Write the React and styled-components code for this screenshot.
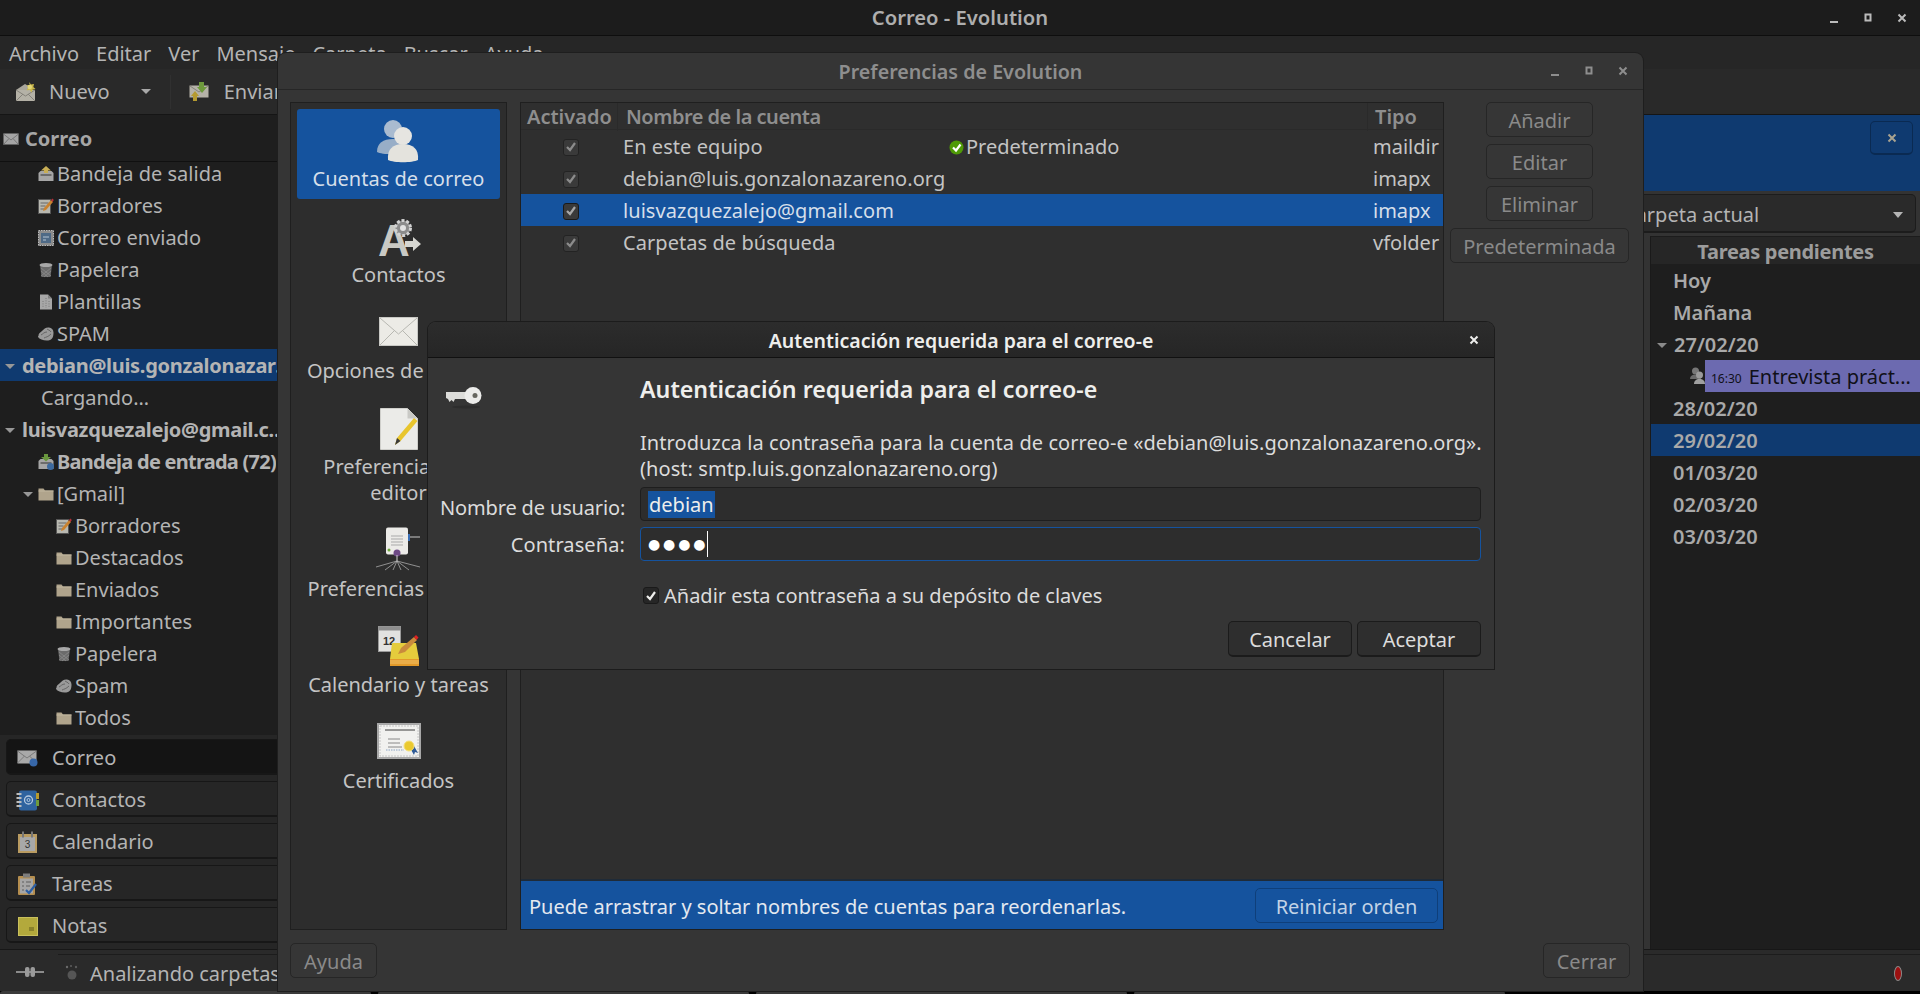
import styled, { createGlobalStyle } from 'styled-components';

const GlobalStyle = createGlobalStyle`
	html, body {
		margin: 0;
		padding: 0;
		background: #000;
		overflow: hidden;
	}
	* {
		box-sizing: border-box;
	}
`;

const Desktop = styled.div`
	position: relative;
	width: 1920px;
	height: 994px;
	overflow: hidden;
	background: #000;
	font-family: "Noto Sans", sans-serif;
	font-size: 20px;
	line-height: 26px;
`;

const Svg = styled.svg`
	display: block;
	flex: none;
`;

/* main window (behind the dialogs) */
const MainWindow = styled.div`
	display: flex;
	flex-direction: column;
	height: 991px;
	background: #262626;
	color: #b4b4b4;
`;

const MainTitleBar = styled.div`
	position: relative;
	display: flex;
	align-items: center;
	justify-content: center;
	height: 36px;
	flex: none;
	padding-bottom: 2px;
	background: #1c1c1c;
	border-bottom: 1px solid #0e0e0e;
	font-weight: 600;
	font-size: 20.2px;
	color: #aeaeae;
`;

const WindowControls = styled.div`
	position: absolute;
	top: 0;
	right: ${(p) => p.$right}px;
	height: 36px;
	display: flex;
	align-items: center;
	gap: 20px;
`;

const MenuBar = styled.div`
	display: flex;
	align-items: center;
	gap: 17px;
	height: 33px;
	flex: none;
	padding: 2px 0 0 9px;
	background: #262626;
`;

const ToolBar = styled.div`
	display: flex;
	align-items: center;
	height: 46px;
	flex: none;
	padding-left: 15px;
	background: #292929;
	border-bottom: 1px solid #151515;
`;

const ToolLabel = styled.span`
	margin-left: ${(p) => p.$gap}px;
`;

const ToolArrow = styled.span`
	width: 0;
	height: 0;
	margin: 0 19px 0 31px;
	border-left: 5px solid transparent;
	border-right: 5px solid transparent;
	border-top: 5px solid #a8a8a8;
`;

const ToolSep = styled.span`
	width: 1px;
	height: 34px;
	margin-right: 18px;
	background: #303030;
`;

const MainBody = styled.div`
	display: flex;
	flex: 1;
	min-height: 0;
`;

const LeftColumn = styled.div`
	display: flex;
	flex-direction: column;
	width: 320px;
	flex: none;
`;

const SidebarHeader = styled.div`
	display: flex;
	align-items: center;
	gap: 6px;
	height: 47px;
	flex: none;
	padding: 2px 0 0 3px;
	background: #1e1e1e;
	border-bottom: 1px solid #101010;
	font-weight: 700;
	color: #a6a6a6;
`;

const TreeScroll = styled.div`
	height: 573px;
	flex: none;
	overflow: hidden;
	background: #1e1e1e;
`;

const TreeRow = styled.div`
	display: flex;
	align-items: center;
	height: 32px;
	padding: 2px 24px 0 ${(p) => p.$indent}px;
	line-height: 26px;
	white-space: nowrap;
	font-weight: ${(p) => (p.$bold ? 700 : 400)};
	letter-spacing: ${(p) => p.$spacing || 0}px;
	background: ${(p) => (p.$selected ? '#0f3a70' : 'transparent')};

	&:first-child {
		height: 27px;
		padding-bottom: 5px;
		line-height: 22px;
	}
`;

const TreeLabel = styled.span`
	min-width: 0;
	overflow: hidden;
	text-overflow: ellipsis;
`;

const TreeArrow = styled.span`
	width: 0;
	height: 0;
	flex: none;
	margin-right: ${(p) => p.$gap}px;
	border-left: 5px solid transparent;
	border-right: 5px solid transparent;
	border-top: 5px solid #979797;
`;

const TreeIcon = styled.span`
	flex: none;
	margin-right: 3px;
`;

const Switcher = styled.div`
	display: flex;
	flex-direction: column;
	gap: 6px;
	flex: 1;
	padding: 4px 0 0 6px;
	background: #262626;
`;

const SwitchButton = styled.div`
	display: flex;
	align-items: center;
	height: 36px;
	flex: none;
	padding: 3px 0 0 10px;
	border: 1px solid #171717;
	border-bottom-width: 2px;
	border-radius: 5px;
	background: ${(p) => (p.$active ? '#141414' : '#262626')};
`;

const SwitchIconSlot = styled.span`
	display: flex;
	justify-content: center;
	width: 21px;
	margin-right: 14px;
	flex: none;
`;

const StatusBar = styled.div`
	display: flex;
	height: 42px;
	flex: none;
	border-top: 1px solid #171717;
	background: #2a2a2a;
`;

const PlugCell = styled.div`
	display: flex;
	align-items: center;
	width: 58px;
	flex: none;
	padding: 2px 0 0 16px;
`;

const StatusMain = styled.div`
	display: flex;
	align-items: center;
	flex: 1;
	margin-top: 4px;
	padding: 0 18px 0 7px;
	border-top: 1px solid #1c1c1c;
`;

const StatusText = styled.span`
	flex: 1;
	margin-left: 11px;
	padding-top: 1px;
`;

const RedLed = styled.span`
	width: 8px;
	height: 15px;
	border-radius: 50%;
	background: #9c1010;
	border: 1px solid #8a8a8a;
`;

const CenterFill = styled.div`
	flex: 1;
	background: #353535;
`;

const RightColumn = styled.div`
	display: flex;
	flex-direction: column;
	width: 320px;
	flex: none;
	background: #333;
`;

const BlueBanner = styled.div`
	display: flex;
	justify-content: flex-end;
	height: 76px;
	flex: none;
	padding: 6px 7px 0 0;
	background: #0f3a70;
`;

const BannerClose = styled.div`
	display: flex;
	align-items: center;
	justify-content: center;
	width: 43px;
	height: 34px;
	border: 1px solid #0a2a52;
	border-bottom-width: 2px;
	border-radius: 5px;
`;

const Combo = styled.div`
	display: flex;
	align-items: center;
	justify-content: space-between;
	height: 39px;
	flex: none;
	margin: 3px 4px 3px 0;
	padding: 3px 12px 0 22px;
	background: #2a2a2a;
	border: 1px solid #1c1c1c;
	border-bottom-width: 2px;
	border-radius: 5px;
`;

const ComboArrow = styled.span`
	width: 0;
	height: 0;
	border-left: 5px solid transparent;
	border-right: 5px solid transparent;
	border-top: 6px solid #b4b4b4;
`;

const TaskPanel = styled.div`
	display: flex;
	flex-direction: column;
	flex: 1;
	min-height: 0;
	margin-left: 50px;
	background: #1e1e1e;
	border-left: 1px solid #1a1a1a;
	border-top: 1px solid #1c1c1c;
	font-weight: 600;
	color: #a9a9a9;
`;

const TaskHeader = styled.div`
	height: 27px;
	flex: none;
	line-height: 29px;
	text-align: center;
	font-weight: 700;
	letter-spacing: -0.3px;
	color: #9c9c9c;
	background: #262626;
`;

const TaskRow = styled.div`
	display: flex;
	align-items: center;
	height: 32px;
	flex: none;
	padding: 2px 0 0 ${(p) => p.$indent || 22}px;
	background: ${(p) => (p.$selected ? '#0f3a70' : 'transparent')};
`;

const TaskArrow = styled.span`
	width: 0;
	height: 0;
	margin-right: 7px;
	border-left: 5px solid transparent;
	border-right: 5px solid transparent;
	border-top: 5px solid #8a8a8a;
`;

const EventRow = styled.div`
	display: flex;
	align-items: center;
	height: 32px;
	flex: none;
	padding-left: 39px;
`;

const EventChip = styled.div`
	display: flex;
	align-items: center;
	flex: 1;
	min-width: 0;
	height: 32px;
	padding: 2px 0 0 6px;
	background: #6c6ab0;
	color: #101018;
	font-weight: 400;
	white-space: nowrap;
	overflow: hidden;
`;

const EventTime = styled.span`
	margin: 4px 7px 0 0;
	font-size: 12px;
`;

const BottomTabs = styled.div`
	display: flex;
	gap: 7px;
	height: 3px;
`;

const BottomTab = styled.div`
	width: 371px;
	background: #3a3a3a;
	border-radius: 3px 3px 0 0;
`;

/* floating windows */
const PrefWindow = styled.div`
	position: absolute;
	left: 278px;
	top: 53px;
	width: 1365px;
	height: 938px;
	display: flex;
	flex-direction: column;
	background: #353535;
	border-radius: 8px 8px 0 0;
	box-shadow: 0 0 0 1px #1e1e1e;
	color: #c9c9c9;
`;

const PrefTitle = styled.div`
	position: relative;
	display: flex;
	align-items: center;
	justify-content: center;
	height: 37px;
	flex: none;
	padding-top: 2px;
	border-bottom: 1px solid #262626;
	font-weight: 600;
	font-size: 19.7px;
	color: #8e8e8e;
`;

const PrefBody = styled.div`
	display: flex;
	flex-direction: column;
	flex: 1;
	min-height: 0;
	padding: 12px 13px 13px 12px;
`;

const PrefMain = styled.div`
	display: flex;
	gap: 13px;
	flex: 1;
	min-height: 0;
`;

const NavList = styled.div`
	display: flex;
	flex-direction: column;
	gap: 6px;
	width: 217px;
	flex: none;
	padding: 6px;
	background: #2d2d2d;
	border: 1px solid #1f1f1f;
	overflow: hidden;
`;

const NavItem = styled.div`
	display: flex;
	flex-direction: column;
	align-items: center;
	justify-content: flex-end;
	height: ${(p) => p.$height || 90}px;
	flex: none;
	padding-bottom: 7px;
	border-radius: 3px;
	text-align: center;
	background: ${(p) => (p.$selected ? '#15539e' : 'transparent')};
	color: ${(p) => (p.$selected ? '#d6dfea' : '#c4c4c4')};
`;

const NavIconSlot = styled.div`
	margin-bottom: ${(p) => p.$lift || 0}px;
`;

const NavLabel = styled.div`
	margin-top: 4px;
	white-space: nowrap;
`;

const AccountsPane = styled.div`
	display: flex;
	flex-direction: column;
	width: 924px;
	flex: none;
	background: #2f2f2f;
	border: 1px solid #1f1f1f;
`;

const AccountsHead = styled.div`
	display: grid;
	grid-template-columns: 97px 750px 1fr;
	height: 27px;
	flex: none;
	line-height: 28px;
	border-bottom: 1px solid #2a2a2a;
	font-weight: 600;
	color: #8e8e8e;
`;

const HeadCell = styled.div`
	padding-left: ${(p) => p.$pad}px;
	letter-spacing: ${(p) => p.$spacing || 0}px;
	border-right: ${(p) => (p.$last ? '0' : '1px solid #2a2a2a')};
`;

const AccountRow = styled.div`
	display: grid;
	grid-template-columns: 97px 329px 420px 1fr;
	align-items: center;
	height: 32px;
	padding-top: 2px;
	background: ${(p) => (p.$selected ? '#15539e' : 'transparent')};
	color: ${(p) => (p.$selected ? '#d6dfea' : '#c4c4c4')};
`;

const CheckCell = styled.div`
	display: flex;
	justify-content: center;
	padding-left: 2px;
`;

const CheckBox = styled.span`
	display: flex;
	align-items: center;
	justify-content: center;
	width: 16px;
	height: 17px;
	flex: none;
	border-radius: 3px;
	border: 1px solid ${(p) => (p.$dark ? '#1a1a1a' : '#232323')};
	background: ${(p) => p.$fill};
`;

const NameCell = styled.div`
	padding-left: 5px;
	letter-spacing: 0.06px;
	white-space: nowrap;
`;

const DefaultCell = styled.div`
	display: flex;
	align-items: center;
	gap: 2px;
	padding-left: 2px;
`;

const TypeCell = styled.div`
	padding-left: 6px;
`;

const AccountsFill = styled.div`
	flex: 1;
`;

const InfoBar = styled.div`
	display: flex;
	align-items: center;
	justify-content: space-between;
	height: 50px;
	flex: none;
	padding: 0 5px 0 8px;
	background: #15539e;
	border-top: 2px solid #1f2b38;
	color: #e4e9f0;
`;

const InfoText = styled.span`
	padding-top: 3px;
`;

const InfoButton = styled.div`
	display: flex;
	align-items: center;
	justify-content: center;
	width: 183px;
	height: 35px;
	padding-top: 3px;
	border: 1px solid #0f3f7a;
	border-radius: 5px;
	color: #c3d3e6;
`;

const ActionColumn = styled.div`
	display: flex;
	flex-direction: column;
	align-items: center;
	gap: 7px;
	width: 179px;
	flex: none;
	margin-left: -7px;
`;

const DisabledButton = styled.div`
	display: flex;
	align-items: center;
	justify-content: center;
	width: ${(p) => p.$width}px;
	height: 35px;
	flex: none;
	padding-top: 2px;
	border: 1px solid #262626;
	border-radius: 5px;
	background: #363636;
	color: #8a8a8a;
`;

const PrefFooter = styled.div`
	display: flex;
	justify-content: space-between;
	flex: none;
	margin-top: 13px;
`;

const Dialog = styled.div`
	position: absolute;
	left: 428px;
	top: 322px;
	width: 1066px;
	height: 347px;
	display: flex;
	flex-direction: column;
	background: #353535;
	border-radius: 8px 8px 0 0;
	box-shadow: 0 0 0 1px #1c1c1c;
	color: #dcdcdc;
`;

const DialogTitle = styled.div`
	position: relative;
	display: flex;
	align-items: center;
	justify-content: center;
	height: 36px;
	flex: none;
	padding-top: 2px;
	background: linear-gradient(#2c2c2c, #262626);
	border-bottom: 1px solid #111;
	border-radius: 8px 8px 0 0;
	font-weight: 600;
	font-size: 19.5px;
	color: #eeeeec;
`;

const DialogClose = styled.div`
	position: absolute;
	right: 13px;
	top: 11px;
`;

const DialogGrid = styled.div`
	display: grid;
	grid-template-columns: 187px 841px;
	column-gap: 13px;
	padding: 18px 0 0 12px;
`;

const KeyCell = styled.div`
	padding: 11px 0 0 6px;
`;

const Heading = styled.div`
	font-size: 23.2px;
	font-weight: 600;
	color: #eeeeec;
`;

const Message = styled.div`
	margin: 28px 0 5px;
	letter-spacing: 0.07px;
	white-space: nowrap;
`;

const FieldLabel = styled.div`
	align-self: center;
	padding: 2px 2px 0 0;
	text-align: right;
	letter-spacing: ${(p) => p.$spacing || 0}px;
	white-space: nowrap;
`;

const Entry = styled.div`
	display: flex;
	align-items: center;
	height: 34px;
	margin-bottom: ${(p) => p.$mb || 0}px;
	padding-left: 7px;
	background: #2d2d2d;
	border: 1px solid ${(p) => (p.$focus ? '#15539e' : '#1e1e1e')};
	border-radius: 4px;
	color: #eeeeec;
`;

const Selected = styled.span`
	padding: 1px 1px 0;
	background: #15539e;
`;

const Dots = styled.span`
	font-family: "DejaVu Sans", sans-serif;
	font-size: 14px;
	letter-spacing: 2.9px;
	color: #fff;
`;

const Caret = styled.span`
	width: 1px;
	height: 26px;
	margin-left: -1px;
	background: #fff;
`;

const RememberRow = styled.div`
	display: flex;
	align-items: center;
	gap: 5px;
	height: 22px;
	margin: 23px 0 15px 3px;
	padding-top: 1px;
`;

const DialogButtons = styled.div`
	display: flex;
	justify-content: flex-end;
	gap: 5px;
`;

const DialogButton = styled.div`
	display: flex;
	align-items: center;
	justify-content: center;
	width: 124px;
	height: 36px;
	padding-top: 2px;
	background: #2e2e2e;
	border: 1px solid #1b1b1b;
	border-bottom-width: 2px;
	border-radius: 5px;
	color: #dcdcdc;
`;

/* icons */
const TinyControl = ({ kind, color }) => (
	<Svg width="14" height="14" viewBox="0 0 14 14">
		{kind === 'min' && <rect x="3" y="10" width="8" height="2" fill={color} />}
		{kind === 'max' && <rect x="4.5" y="3.5" width="5" height="6" fill="none" stroke={color} strokeWidth="2" />}
		{kind === 'close' && <path d="M3.5 3.5l7 7M10.5 3.5l-7 7" stroke={color} strokeWidth="2" fill="none" />}
	</Svg>
);

const MailSmall = () => (
	<Svg width="16" height="14" viewBox="0 0 16 14">
		<rect x="0.5" y="1.5" width="15" height="11" fill="#a5a5a5" />
		<path d="M0.5 2l7.5 6 7.5-6M0.5 12.5l5.5-6M15.5 12.5l-5.5-6" stroke="#777" fill="none" />
	</Svg>
);

const NewMailIcon = () => (
	<Svg width="22" height="22" viewBox="0 0 22 22">
		<path d="M1 9l9-6 5 3v14H1z" fill="#a9a69c" />
		<rect x="1" y="9" width="19" height="11" fill="#b4b1a6" />
		<path d="M1 9l9.5 6L20 9M1 20l7-7M20 20l-7-7" stroke="#85827a" fill="none" />
		<path d="M14 1l2 2.6 3-.6-.7 3 2.2 2-3 .7-1 2.8-1.8-2.4-3 .2 1.4-2.8-1.2-2.6 3 .6z" fill="#c9b74a" />
		<circle cx="14.8" cy="6" r="2.2" fill="#e2d778" />
	</Svg>
);

const SendReceiveIcon = () => (
	<Svg width="20" height="20" viewBox="0 0 20 20">
		<rect x="0.5" y="3.5" width="19" height="12" fill="#b5b2a8" />
		<path d="M1 4l9 6 9-6" stroke="#84827a" fill="none" />
		<path d="M10 0h5v5h3l-5 6-5-6h2z" fill="#6e9a3c" />
		<path d="M4 19v-5H2l4-5 4 5H8v5z" fill="#b59a30" />
	</Svg>
);

const Outbox = () => (
	<Svg width="16" height="16" viewBox="0 0 16 16">
		<path d="M0.5 7l2-2h11l2 2v8h-15z" fill="#a6a6a6" />
		<rect x="2.5" y="8" width="11" height="2" fill="#6c6c6c" />
		<path d="M8 0l5 4.5h-3V7H6V4.5H3z" fill="#c8ae55" />
	</Svg>
);

const Drafts = () => (
	<Svg width="16" height="16" viewBox="0 0 16 16">
		<rect x="0.5" y="1.5" width="12" height="14" fill="#b8b8b0" stroke="#555" />
		<path d="M2.5 5h8M2.5 8h5M2.5 11h4" stroke="#666" />
		<path d="M5 13l1-3 7-8 2 2-7 8z" fill="#c9822f" />
		<path d="M13 2l1.4-1.4 1.4 1.4L14.5 4z" fill="#b8313a" />
	</Svg>
);

const Sent = () => (
	<Svg width="16" height="16" viewBox="0 0 16 16">
		<rect x="0.5" y="0.5" width="15" height="15" fill="#8d8d8d" stroke="#bbb" strokeDasharray="1.5 1" />
		<rect x="3" y="3" width="10" height="10" fill="#4f6a86" />
		<path d="M5 7h6M5 10h3" stroke="#b5c4d3" />
	</Svg>
);

const Trash = () => (
	<Svg width="16" height="16" viewBox="0 0 16 16">
		<path d="M2 3l1.5 12h9L14 3z" fill="#6b6b6b" />
		<path d="M3 6l10 8M13 6L3 14M3 9l7 6M13 9l-7 6" stroke="#8a8a8a" strokeWidth="0.8" />
		<ellipse cx="8" cy="3" rx="6.5" ry="2" fill="#a8a8a8" />
	</Svg>
);

const Template = () => (
	<Svg width="16" height="16" viewBox="0 0 16 16">
		<path d="M2 0.5h8l4 4V15.5H2z" fill="#a7a7a7" />
		<path d="M10 0.5v4h4z" fill="#7f7f7f" />
		<path d="M8 4v10M5 7v7M11 7v7" stroke="#777" strokeDasharray="1 1.4" />
	</Svg>
);

const Spam = () => (
	<Svg width="16" height="16" viewBox="0 0 16 16">
		<path d="M0.5 10c0-3 2-3.5 3.5-5C6 3 8 1 11 1.5c2.5.4 4.5 2 4.5 5s-.5 6.5-3.5 7.5-6 .5-8.500-.5-3.500-2-3.500-3.500z" fill="#9a9a9a" />
		<path d="M3 9c2-1 3-3 6-3M6 12c2-1 4-1 7-4M9 3c1 1 3 1 4 3" stroke="#666" fill="none" />
	</Svg>
);

const Inbox = () => (
	<Svg width="16" height="16" viewBox="0 0 16 16">
		<path d="M0.5 7l2-2h11l2 2v8h-15z" fill="#a6a6a6" />
		<rect x="2.5" y="8" width="11" height="2" fill="#6c6c6c" />
		<path d="M6 0h4v3h3L8 7.500 3 3h3z" fill="#69963e" />
		<circle cx="12.500" cy="12.500" r="3.500" fill="#3d6a9f" />
	</Svg>
);

const Folder = () => (
	<Svg width="16" height="14" viewBox="0 0 16 14">
		<path d="M0.5 1.500h5l1.500 2h8.500v10h-15z" fill="#b0a48c" />
		<rect x="0.5" y="3.500" width="15" height="1" fill="#c2b79f" />
	</Svg>
);

const SwitchMail = () => (
	<Svg width="21" height="18" viewBox="0 0 21 18">
		<rect x="0.5" y="1.500" width="19" height="13" fill="#a9a9a9" />
		<path d="M0.500 2l9.500 7 9.500-7M0.500 14l7-7M19.500 14l-7-7" stroke="#7a7a7a" fill="none" />
		<circle cx="16.500" cy="13.500" r="4" fill="#3767a8" />
	</Svg>
);

const SwitchContacts = () => (
	<Svg width="23" height="21" viewBox="0 0 23 21">
		<rect x="3" y="0.500" width="18" height="20" rx="2" fill="#2f639f" />
		<rect x="20" y="3" width="3" height="6" fill="#b79a2e" />
		<rect x="20" y="10" width="3" height="6" fill="#6f9a3c" />
		<path d="M0.500 4h5M0.500 8h5M0.500 12h5M0.500 16h5" stroke="#bcbcbc" strokeWidth="2" />
		<circle cx="12.500" cy="10" r="4" fill="none" stroke="#b5c9e0" strokeWidth="1.300" />
		<circle cx="12.500" cy="10" r="1.500" fill="none" stroke="#b5c9e0" />
	</Svg>
);

const SwitchCalendar = () => (
	<Svg width="21" height="23" viewBox="0 0 21 23">
		<rect x="1" y="3" width="19" height="19" fill="#b99b61" />
		<rect x="3" y="6" width="15" height="14" fill="#a8a8a8" />
		<path d="M6 0.500v6M15 0.500v6" stroke="#777" strokeWidth="2" />
		<text x="10.500" y="17" fontSize="10" textAnchor="middle" fill="#333" fontFamily="Liberation Sans">3</text>
	</Svg>
);

const SwitchTasks = () => (
	<Svg width="21" height="23" viewBox="0 0 21 23">
		<rect x="1" y="3" width="17" height="19" rx="1" fill="#b58e4f" />
		<rect x="3" y="5.500" width="13" height="15" fill="#a6a6a6" />
		<rect x="6" y="0.500" width="7" height="4" fill="#7d7d7d" />
		<path d="M5 9h2M9 9h5M5 13h2M9 13h4M5 17h2" stroke="#5e5e5e" />
		<path d="M9 17l3 3 7-9" stroke="#2c5ea3" strokeWidth="2.200" fill="none" />
	</Svg>
);

const SwitchNotes = () => (
	<Svg width="20" height="19" viewBox="0 0 20 19">
		<rect x="0.500" y="0.500" width="19" height="18" fill="#b3a93c" stroke="#c9c05c" />
		<path d="M11 14v-4h5zM11 14l5-4v4z" fill="#8a822b" />
	</Svg>
);

const PlugIcon = () => (
	<Svg width="28" height="12" viewBox="0 0 28 12">
		<path d="M0 6h28" stroke="#8b8b8b" strokeWidth="2" />
		<rect x="9" y="1" width="4.500" height="10" rx="2" fill="#9a9a9a" />
		<rect x="14.500" y="1" width="4.500" height="10" rx="2" fill="#9a9a9a" />
	</Svg>
);

const PawIcon = () => (
	<Svg width="14" height="16" viewBox="0 0 14 16">
		<circle cx="7" cy="10" r="4.500" fill="#555" />
		<circle cx="2" cy="2" r="1.200" fill="#6a6a6a" />
		<circle cx="6" cy="1" r="1" fill="#5e5e5e" />
		<circle cx="11" cy="2" r="1.200" fill="#5a5a5a" />
	</Svg>
);

const UsersIcon = () => (
	<Svg width="48" height="48" viewBox="0 0 48 48">
		<circle cx="18" cy="13" r="9" fill="#a9bbd0" />
		<path d="M2 36c0-9 6-13 16-13s14 4 14 13c-5 3-25 3-30 0z" fill="#98aec7" />
		<circle cx="28" cy="20" r="9" fill="#e6e5e1" />
		<path d="M13 44c-1-11 5-16 15-16s16 5 15 16c-6 3-24 3-30 0z" fill="#e4e3dd" />
	</Svg>
);

const ContactsGearIcon = () => (
	<Svg width="48" height="42" viewBox="0 0 48 42">
		<text x="19" y="40" fontSize="44" fontWeight="700" textAnchor="middle" fill="#c9c9c4" fontFamily="Liberation Sans">A</text>
		<circle cx="28" cy="12" r="7.500" fill="#8c8c8c" stroke="#d2d2d2" strokeWidth="3" strokeDasharray="3 1.800" />
		<circle cx="28" cy="12" r="3" fill="#e2e2e2" />
		<path d="M30 25h8v-4l8 7-8 7v-4h-8z" fill="#d6d6d1" />
	</Svg>
);

const EnvelopeIcon = () => (
	<Svg width="39" height="29" viewBox="0 0 39 29">
		<rect x="0.500" y="0.500" width="38" height="28" fill="#ecebe6" stroke="#c8c8c4" />
		<path d="M1 1l18.500 16L38 1M1 28l14-14M38 28L24 14" stroke="#b8b8b2" fill="none" />
	</Svg>
);

const EditorIcon = () => (
	<Svg width="38" height="42" viewBox="0 0 38 42">
		<path d="M0.500 0.500h27l10 10v31h-37z" fill="#ebebe8" stroke="#cfcfcb" />
		<path d="M27.500 0.500v10h10z" fill="#c9c9c5" />
		<path d="M15 37l2-7 17-20 3.500 3-17 20z" fill="#e8c52d" />
		<path d="M15 37l2-7 3.500 3z" fill="#3a3a3a" />
	</Svg>
);

const NetworkIcon = () => (
	<Svg width="48" height="44" viewBox="0 0 48 44">
		<rect x="11" y="0.500" width="22" height="27" rx="2" fill="#ecebe8" />
		<path d="M16 9h12M16 12h12M16 15h12M16 18h12" stroke="#a9a9a9" />
		<circle cx="14" cy="23" r="1.500" fill="#6fa83c" />
		<rect x="33" y="7" width="2" height="7" fill="#3a6fb5" />
		<path d="M35 10h10" stroke="#c8c8c8" />
		<circle cx="22" cy="26" r="3.500" fill="#6e4a86" />
		<path d="M22 28v7" stroke="#d0d0d0" />
		<g stroke="#b0b0b0" strokeOpacity="0.75" fill="none">
			<path d="M22 34L1 40M22 34l-12 9M22 34l-4 9M22 34l4 9M22 34l12 9M22 34l23 6" />
		</g>
	</Svg>
);

const CalendarTasksIcon = () => (
	<Svg width="42" height="41" viewBox="0 0 42 41">
		<rect x="0.500" y="0.500" width="22" height="25" fill="#e2e2e0" stroke="#9a9a9a" />
		<rect x="0.500" y="0.500" width="22" height="4" fill="#8d8d8d" />
		<text x="11" y="19" fontSize="11" fontWeight="700" textAnchor="middle" fill="#333" fontFamily="Liberation Sans">12</text>
		<path d="M14 17h24l3 16H12z" fill="#e5cc3c" />
		<rect x="12" y="33" width="29" height="7" fill="#e39a2a" />
		<path d="M12 35h29M12 37h29" stroke="#f2c169" />
		<path d="M20 28l3-6 13-11 3 3-12 12z" fill="#c98a3c" />
		<path d="M36 11l2-2 2.500 2.500-2 2.500z" fill="#d22" />
	</Svg>
);

const CertificateIcon = () => (
	<Svg width="44" height="36" viewBox="0 0 44 36">
		<rect x="1" y="1" width="42" height="34" fill="#f1f1ef" stroke="#a8a8a8" strokeWidth="2" />
		<rect x="3" y="3" width="38" height="30" fill="none" stroke="#c6c6c6" strokeDasharray="2 1" />
		<path d="M8 7h30" stroke="#777" strokeWidth="1.500" />
		<path d="M11 16h12M11 20h12M11 24h14" stroke="#888" />
		<path d="M9 27h18" stroke="#8aa4c4" strokeDasharray="1.500 1" />
		<path d="M33 25l4 7 1-3 3 1-4-7z" fill="#2f5a96" />
		<circle cx="32" cy="23" r="5" fill="#eac92f" stroke="#f3df7a" />
	</Svg>
);

const DefaultBadge = () => (
	<Svg width="15" height="15" viewBox="0 0 15 15">
		<circle cx="7.500" cy="7.500" r="7" fill="#4e9a06" />
		<path d="M4 7.500l3 3 4.500-6" stroke="#fff" strokeWidth="2.200" fill="none" />
	</Svg>
);

const CheckMark = ({ color }) => (
	<Svg width="12" height="12" viewBox="0 0 12 12">
		<path d="M2 6l3 3 5-7" stroke={color} strokeWidth="2.200" fill="none" />
	</Svg>
);

const KeyIcon = () => (
	<Svg width="38" height="22" viewBox="0 0 38 22">
		<path d="M0 5h22v7H9l-1.500 3-2-2-2 2L2 12 0 11z" fill="#dcdcd9" />
		<circle cx="27" cy="8.500" r="8.500" fill="#ececea" />
		<circle cx="29" cy="8.500" r="2.500" fill="#66665f" />
		<ellipse cx="20" cy="20" rx="14" ry="1.500" fill="#2d2d2d" />
	</Svg>
);

const PersonSmall = () => (
	<Svg width="15" height="18" viewBox="0 0 15 18">
		<circle cx="5.500" cy="4" r="3.500" fill="#777" />
		<path d="M0 12c0-3 2-4.500 5.500-4.500S11 9 11 12z" fill="#6a6a6a" />
		<circle cx="9.500" cy="8" r="3.500" fill="#9a9a9a" />
		<path d="M4 17c0-3 2-5 5.500-5s5.500 2 5.500 5z" fill="#a0a0a0" />
	</Svg>
);

const folderRows = [
	{ label: 'Bandeja de salida', icon: <Outbox />, indent: 38 },
	{ label: 'Borradores', icon: <Drafts />, indent: 38 },
	{ label: 'Correo enviado', icon: <Sent />, indent: 38 },
	{ label: 'Papelera', icon: <Trash />, indent: 38 },
	{ label: 'Plantillas', icon: <Template />, indent: 38 },
	{ label: 'SPAM', icon: <Spam />, indent: 38 },
	{ label: 'debian@luis.gonzalonazareno.org', arrowGap: 7, indent: 5, bold: true, selected: true, spacing: -0.3 },
	{ label: 'Cargando…', indent: 41 },
	{ label: 'luisvazquezalejo@gmail.com', arrowGap: 7, indent: 5, bold: true, spacing: -0.3 },
	{ label: 'Bandeja de entrada (72)', icon: <Inbox />, indent: 38, bold: true, spacing: -0.75 },
	{ label: '[Gmail]', icon: <Folder />, arrowGap: 5, indent: 23 },
	{ label: 'Borradores', icon: <Drafts />, indent: 56 },
	{ label: 'Destacados', icon: <Folder />, indent: 56 },
	{ label: 'Enviados', icon: <Folder />, indent: 56 },
	{ label: 'Importantes', icon: <Folder />, indent: 56 },
	{ label: 'Papelera', icon: <Trash />, indent: 56 },
	{ label: 'Spam', icon: <Spam />, indent: 56 },
	{ label: 'Todos', icon: <Folder />, indent: 56 },
];

const switchItems = [
	{ label: 'Correo', icon: <SwitchMail />, active: true },
	{ label: 'Contactos', icon: <SwitchContacts /> },
	{ label: 'Calendario', icon: <SwitchCalendar /> },
	{ label: 'Tareas', icon: <SwitchTasks /> },
	{ label: 'Notas', icon: <SwitchNotes /> },
];

const navItems = [
	{ lines: ['Cuentas de correo'], icon: <UsersIcon />, selected: true, lift: -2 },
	{ lines: ['Contactos'], icon: <ContactsGearIcon /> },
	{ lines: ['Opciones de correo'], icon: <EnvelopeIcon />, lift: 8 },
	{ lines: ['Preferencias del', 'editor'], icon: <EditorIcon />, height: 116 },
	{ lines: ['Preferencias de red'], icon: <NetworkIcon />, lift: 1 },
	{ lines: ['Calendario y tareas'], icon: <CalendarTasksIcon />, lift: 1 },
	{ lines: ['Certificados'], icon: <CertificateIcon />, lift: 5 },
];

const accounts = [
	{ name: 'En este equipo', type: 'maildir', isDefault: true },
	{ name: 'debian@luis.gonzalonazareno.org', type: 'imapx' },
	{ name: 'luisvazquezalejo@gmail.com', type: 'imapx', selected: true },
	{ name: 'Carpetas de búsqueda', type: 'vfolder' },
];

const App = () => {
	return (
		<>
			<GlobalStyle />
			<Desktop>
				<MainWindow>
					<MainTitleBar>
						Correo - Evolution
						<WindowControls $right={11}>
							<TinyControl kind="min" color="#bbb" />
							<TinyControl kind="max" color="#bbb" />
							<TinyControl kind="close" color="#bbb" />
						</WindowControls>
					</MainTitleBar>
					<MenuBar>
						{['Archivo', 'Editar', 'Ver', 'Mensaje', 'Carpeta', 'Buscar', 'Ayuda'].map((m) => (
							<span key={m}>{m}</span>
						))}
					</MenuBar>
					<ToolBar>
						<NewMailIcon />
						<ToolLabel $gap={12}>Nuevo</ToolLabel>
						<ToolArrow />
						<ToolSep />
						<SendReceiveIcon />
						<ToolLabel $gap={15}>Enviar / Recibir</ToolLabel>
					</ToolBar>
					<MainBody>
						<LeftColumn>
							<SidebarHeader>
								<MailSmall />
								Correo
							</SidebarHeader>
							<TreeScroll>
								{folderRows.map((r, i) => (
									<TreeRow key={i} $indent={r.indent} $bold={r.bold} $selected={r.selected} $spacing={r.spacing}>
										{r.arrowGap && <TreeArrow $gap={r.arrowGap} />}
										{r.icon && <TreeIcon>{r.icon}</TreeIcon>}
										<TreeLabel>{r.label}</TreeLabel>
									</TreeRow>
								))}
							</TreeScroll>
							<Switcher>
								{switchItems.map((s) => (
									<SwitchButton key={s.label} $active={s.active}>
										<SwitchIconSlot>{s.icon}</SwitchIconSlot>
										{s.label}
									</SwitchButton>
								))}
							</Switcher>
						</LeftColumn>
						<CenterFill />
						<RightColumn>
							<BlueBanner>
								<BannerClose>
									<TinyControl kind="close" color="#a9a390" />
								</BannerClose>
							</BlueBanner>
							<Combo>
								Carpeta actual
								<ComboArrow />
							</Combo>
							<TaskPanel>
								<TaskHeader>Tareas pendientes</TaskHeader>
								<TaskRow>Hoy</TaskRow>
								<TaskRow>Mañana</TaskRow>
								<TaskRow $indent={6}>
									<TaskArrow />
									27/02/20
								</TaskRow>
								<EventRow>
									<PersonSmall />
									<EventChip>
										<EventTime>16:30</EventTime>
										Entrevista práct...
									</EventChip>
								</EventRow>
								<TaskRow>28/02/20</TaskRow>
								<TaskRow $selected>29/02/20</TaskRow>
								<TaskRow>01/03/20</TaskRow>
								<TaskRow>02/03/20</TaskRow>
								<TaskRow>03/03/20</TaskRow>
							</TaskPanel>
						</RightColumn>
					</MainBody>
					<StatusBar>
						<PlugCell>
							<PlugIcon />
						</PlugCell>
						<StatusMain>
							<PawIcon />
							<StatusText>Analizando carpetas en «luisvazquezalejo@gmail.com»</StatusText>
							<RedLed />
						</StatusMain>
					</StatusBar>
				</MainWindow>
				<BottomTabs>
					<BottomTab />
					<BottomTab />
					<BottomTab />
					<BottomTab />
				</BottomTabs>

				<PrefWindow>
					<PrefTitle>
						Preferencias de Evolution
						<WindowControls $right={13}>
							<TinyControl kind="min" color="#8e8e8e" />
							<TinyControl kind="max" color="#8e8e8e" />
							<TinyControl kind="close" color="#8e8e8e" />
						</WindowControls>
					</PrefTitle>
					<PrefBody>
						<PrefMain>
							<NavList>
								{navItems.map((n) => (
									<NavItem key={n.lines[0]} $selected={n.selected} $height={n.height}>
										<NavIconSlot $lift={n.lift}>{n.icon}</NavIconSlot>
										<NavLabel>
											{n.lines.map((l) => (
												<div key={l}>{l}</div>
											))}
										</NavLabel>
									</NavItem>
								))}
							</NavList>
							<AccountsPane>
								<AccountsHead>
									<HeadCell $pad={6}>Activado</HeadCell>
									<HeadCell $pad={8} $spacing={-0.5}>Nombre de la cuenta</HeadCell>
									<HeadCell $pad={7} $last>Tipo</HeadCell>
								</AccountsHead>
								{accounts.map((a) => (
									<AccountRow key={a.name} $selected={a.selected}>
										<CheckCell>
											<CheckBox $dark={a.selected} $fill="#3a3a3a">
												<CheckMark color={a.selected ? '#a8a8a8' : '#8c8c8c'} />
											</CheckBox>
										</CheckCell>
										<NameCell>{a.name}</NameCell>
										<DefaultCell>
											{a.isDefault && (
												<>
													<DefaultBadge />
													Predeterminado
												</>
											)}
										</DefaultCell>
										<TypeCell>{a.type}</TypeCell>
									</AccountRow>
								))}
								<AccountsFill />
								<InfoBar>
									<InfoText>Puede arrastrar y soltar nombres de cuentas para reordenarlas.</InfoText>
									<InfoButton>Reiniciar orden</InfoButton>
								</InfoBar>
							</AccountsPane>
							<ActionColumn>
								<DisabledButton $width={107}>Añadir</DisabledButton>
								<DisabledButton $width={107}>Editar</DisabledButton>
								<DisabledButton $width={107}>Eliminar</DisabledButton>
								<DisabledButton $width={179}>Predeterminada</DisabledButton>
							</ActionColumn>
						</PrefMain>
						<PrefFooter>
							<DisabledButton $width={87}>Ayuda</DisabledButton>
							<DisabledButton $width={87}>Cerrar</DisabledButton>
						</PrefFooter>
					</PrefBody>
				</PrefWindow>

				<Dialog>
					<DialogTitle>
						Autenticación requerida para el correo-e
						<DialogClose>
							<TinyControl kind="close" color="#eeeeec" />
						</DialogClose>
					</DialogTitle>
					<DialogGrid>
						<KeyCell>
							<KeyIcon />
						</KeyCell>
						<div>
							<Heading>Autenticación requerida para el correo-e</Heading>
							<Message>
								Introduzca la contraseña para la cuenta de correo-e «debian@luis.gonzalonazareno.org».
								<br />
								(host: smtp.luis.gonzalonazareno.org)
							</Message>
						</div>
						<FieldLabel $spacing={-0.15}>Nombre de usuario:</FieldLabel>
						<Entry $mb={6}>
							<Selected>debian</Selected>
						</Entry>
						<FieldLabel $spacing={0.1}>Contraseña:</FieldLabel>
						<Entry $focus>
							<Dots>●●●●</Dots>
							<Caret />
						</Entry>
						<span />
						<div>
							<RememberRow>
								<CheckBox $dark $fill="#262626">
									<CheckMark color="#eeeeec" />
								</CheckBox>
								Añadir esta contraseña a su depósito de claves
							</RememberRow>
							<DialogButtons>
								<DialogButton>Cancelar</DialogButton>
								<DialogButton>Aceptar</DialogButton>
							</DialogButtons>
						</div>
					</DialogGrid>
				</Dialog>
			</Desktop>
		</>
	);
};

export default App;
